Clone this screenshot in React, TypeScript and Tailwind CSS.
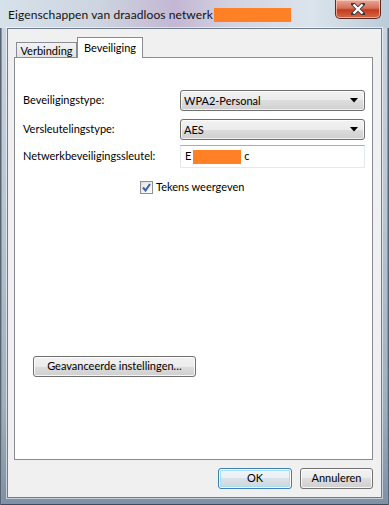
import React from "react";

const font = { fontFamily: 'Lato, "Noto Sans", sans-serif' };

function Combo({ value }: { value: string }) {
  return (
    <div className="w-[185px] h-[21px] rounded-[3px] border border-[#707070] bg-[linear-gradient(to_bottom,#f2f2f2_0%,#ebebeb_50%,#dddddd_50%,#cfcfcf_100%)] flex items-center justify-between pl-[3px] pr-[6px] shadow-[inset_0_0_0_1px_rgba(255,255,255,0.7)]">
      <span className="text-[11px] leading-none text-black">{value}</span>
      <svg width="8" height="5" viewBox="0 0 8 5">
        <path d="M0 0 H8 L4 4.5 Z" fill="#000" />
      </svg>
    </div>
  );
}

function Button({ label, w, isDefault }: { label: string; w: string; isDefault?: boolean }) {
  return (
    <div
      className={
        "h-[21px] rounded-[3px] border flex items-center justify-center text-[11px] text-black " +
        w +
        (isDefault
          ? " border-[#3c7fb1] bg-[linear-gradient(to_bottom,#f1f5f8_0%,#e9eff3_50%,#d9e2e8_50%,#cbd6de_100%)] shadow-[inset_0_0_0_1px_#ffffff,inset_0_0_0_2px_#a9dcf5]"
          : " border-[#707070] bg-[linear-gradient(to_bottom,#f2f2f2_0%,#ebebeb_50%,#dddddd_50%,#cfcfcf_100%)] shadow-[inset_0_0_0_1px_rgba(255,255,255,0.8)]")
      }
    >
      {label}
    </div>
  );
}

export default function App() {
  return (
    <div
      className="w-[389px] h-[505px] flex flex-col bg-[linear-gradient(to_bottom,#cbd7e2_0%,#b9c7d4_40%,#9eafc0_80%,#7f90a5_100%)] shadow-[inset_1px_0_0_#5a6470,inset_-1px_0_0_#5a6470,inset_0_-1px_0_#3e4a58,inset_2px_0_0_#8a96a4,inset_-2px_0_0_#8a96a4]"
      style={font}
    >
      {/* title bar */}
      <div className="h-[28px] flex items-start justify-between pl-[8px] pr-[8px] bg-[linear-gradient(to_right,#d7e1ea_0%,#cdd5e0_25%,#c3b7d3_45%,#d3d3e0_60%,#dbe4ec_80%,#bccbd9_100%)]">
        <div className="mt-[7px] flex items-center text-[12px] tracking-[0.1px] leading-[15px] text-[#111]">
          <span>Eigenschappen van draadloos netwerk</span>
          <span className="ml-[1px] inline-block w-[77px] h-[14px] bg-[#ff8025]" />
        </div>
        <div className="w-[46px] h-[19px] rounded-b-[5px] border border-t-0 border-[#5e2a20] bg-[linear-gradient(to_bottom,#e8a896_0%,#d4705a_45%,#c43c1c_55%,#d26a4c_100%)] flex items-center justify-center shadow-[inset_0_0_0_1px_rgba(255,220,210,0.6)]">
          <svg width="14" height="12" viewBox="0 0 14 12">
            <path
              d="M2 1 L12 11 M12 1 L2 11"
              stroke="#3a3a3a"
              strokeWidth="4"
              strokeLinecap="square"
              fill="none"
            />
            <path d="M2.5 1.5 L11.5 10.5 M11.5 1.5 L2.5 10.5" stroke="#ffffff" strokeWidth="2.4" fill="none" />
          </svg>
        </div>
      </div>

      {/* client area */}
      <div className="mx-[7px] h-[470px] border border-[#6f7c8c] bg-[#f0f0f0] flex flex-col shadow-[0_0_0_1px_rgba(255,255,255,0.55)]">
        <div className="ml-[6px] mr-[8px] pt-[8px] flex flex-col">
          {/* tabs */}
          <div className="h-[20px] flex items-end">
            <div className="ml-[2px] w-[61px] h-[15px] border border-b-0 border-[#898c95] bg-[linear-gradient(to_bottom,#f2f2f2,#e3e3e3)] flex items-center justify-center text-[11px] text-black leading-none pt-[1px]">
              Verbinding
            </div>
            <div className="relative z-10 -mb-[1px] w-[66px] h-[21px] border border-b-0 border-[#898c95] bg-white flex items-start justify-center text-[11px] text-black leading-none pt-[4px]">
              Beveiliging
            </div>
          </div>

          {/* panel */}
          <div className="h-[403px] border border-[#898c95] bg-white flex flex-col pl-[8px]">
            <div className="mt-[32px] flex items-center">
              <span className="w-[157px] text-[11px] text-black">Beveiligingstype:</span>
              <Combo value="WPA2-Personal" />
            </div>
            <div className="mt-[8px] flex items-center">
              <span className="w-[157px] text-[11px] text-black">Versleutelingstype:</span>
              <Combo value="AES" />
            </div>
            <div className="mt-[5px] flex items-center">
              <span className="w-[157px] text-[11px] text-black">Netwerkbeveiligingssleutel:</span>
              <div className="w-[185px] h-[23px] border border-[#e3e9ef] border-t-[#abadb3] bg-white flex items-center pl-[4px] text-[11px] text-black">
                <span>E</span>
                <span className="ml-[2px] inline-block w-[48px] h-[14px] bg-[#ff8025]" />
                <span className="ml-[3px]">c</span>
              </div>
            </div>
            <div className="mt-[11px] ml-[117px] flex items-center">
              <div className="w-[13px] h-[13px] border border-[#8e8f8f] bg-[linear-gradient(135deg,#dcdcdc,#ffffff)] flex items-center justify-center p-[1px]">
                <div className="w-full h-full bg-[linear-gradient(135deg,#e6e6e6,#fbfbfb)] flex items-center justify-center">
                  <svg width="9" height="9" viewBox="0 0 9 9">
                    <path d="M1 4.5 L3.5 7.5 L8 1" stroke="#3d5fa3" strokeWidth="2" fill="none" />
                  </svg>
                </div>
              </div>
              <span className="ml-[3px] text-[11px] text-black">Tekens weergeven</span>
            </div>
            <div className="mt-[160px] ml-[10px]">
              <Button label="Geavanceerde instellingen…" w="w-[163px]" />
            </div>
          </div>

          {/* bottom buttons */}
          <div className="mt-[8px] flex justify-end gap-[8px]">
            <Button label="OK" w="w-[74px]" isDefault />
            <Button label="Annuleren" w="w-[73px]" />
          </div>
        </div>
      </div>
    </div>
  );
}
